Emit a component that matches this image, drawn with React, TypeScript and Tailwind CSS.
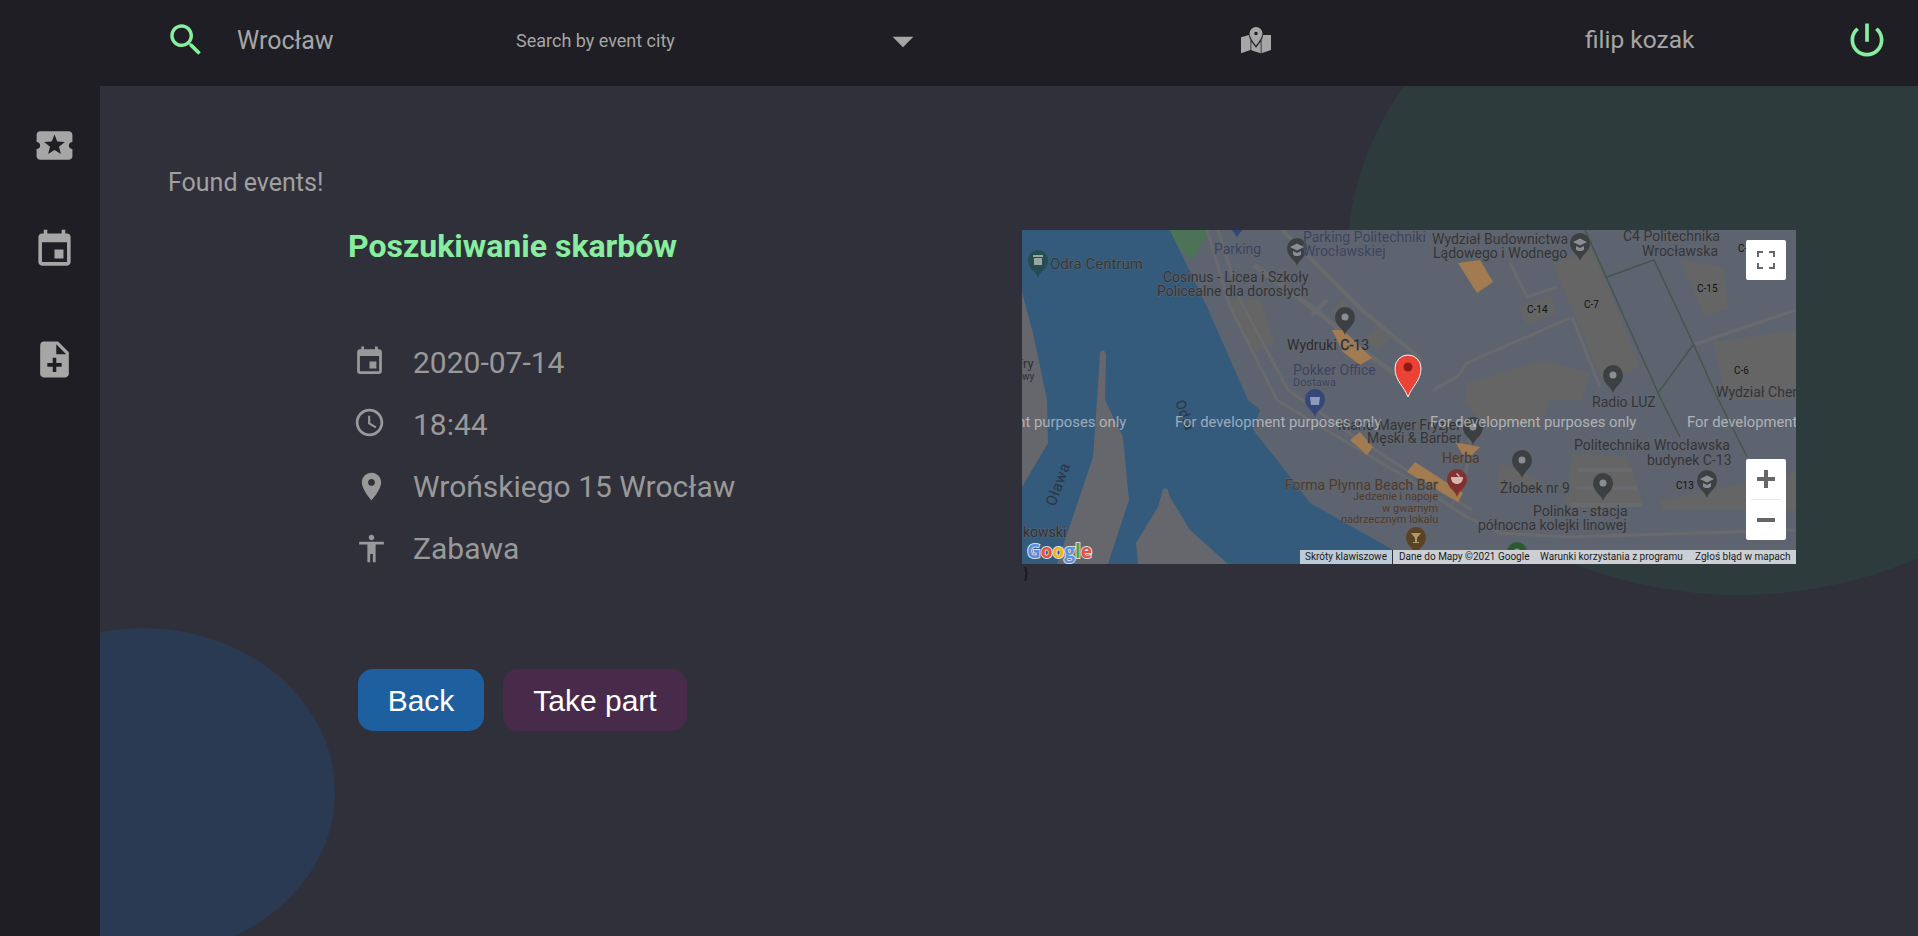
const ICONS = {
  search: 'M15.5 14h-.79l-.28-.27C15.41 12.59 16 11.11 16 9.5 16 5.91 13.09 3 9.5 3S3 5.91 3 9.5 5.91 16 9.5 16c1.61 0 3.09-.59 4.23-1.57l.27.28v.79l5 4.99L20.49 19l-4.99-5zm-6 0C7.01 14 5 11.99 5 9.5S7.01 5 9.5 5 14 7.01 14 9.5 11.99 14 9.5 14z',
  ticket: 'M20 12c0-1.1.9-2 2-2V6c0-1.1-.9-2-2-2H4c-1.1 0-1.99.9-1.99 2v4c1.1 0 1.99.9 1.99 2s-.89 2-2 2v4c0 1.1.9 2 2 2h16c1.1 0 2-.9 2-2v-4c-1.1 0-2-.9-2-2zm-4.42 4.8L12 14.5l-3.58 2.3 1.08-4.12-3.29-2.69 4.24-.25L12 5.8l1.54 3.95 4.24.25-3.29 2.69 1.09 4.11z',
  event: 'M17 12h-5v5h5v-5zM16 1v2H8V1H6v2H5c-1.11 0-1.99.9-1.99 2L3 19c0 1.1.89 2 2 2h14c1.1 0 2-.9 2-2V5c0-1.1-.9-2-2-2h-1V1h-2zm3 18H5V8h14v11z',
  noteAdd: 'M14 2H6c-1.1 0-1.99.9-1.99 2L4 20c0 1.1.89 2 1.99 2H18c1.1 0 2-.9 2-2V8l-6-6zm2 14h-3v3h-2v-3H8v-2h3v-3h2v3h3v2zm-3-7V3.5L18.5 9H13z',
  time: 'M11.99 2C6.47 2 2 6.48 2 12s4.47 10 9.99 10C17.52 22 22 17.52 22 12S17.52 2 11.99 2zM12 20c-4.42 0-8-3.58-8-8s3.58-8 8-8 8 3.58 8 8-3.58 8-8 8zM12.5 7H11v6l5.25 3.15.75-1.23-4.5-2.67z',
  room: 'M12 2C8.13 2 5 5.13 5 9c0 5.25 7 13 7 13s7-7.75 7-13c0-3.87-3.13-7-7-7zm0 9.5c-1.38 0-2.5-1.12-2.5-2.5s1.12-2.5 2.5-2.5 2.5 1.12 2.5 2.5-1.12 2.5-2.5 2.5z',
  person: 'M12 2c1.1 0 2 .9 2 2s-.9 2-2 2-2-.9-2-2 .9-2 2-2zm9 7h-6v13h-2v-6h-2v6H9V9H3V7h18v2z',
  drop: 'M7 10l5 5 5-5z',
  power: 'M13 3h-2v10h2V3zm4.83 2.17l-1.42 1.42C17.99 7.86 19 9.81 19 12c0 3.87-3.13 7-7 7s-7-3.13-7-7c0-2.19 1.01-4.14 2.58-5.42L6.17 5.17C4.23 6.82 3 9.26 3 12c0 4.97 4.03 9 9 9s9-4.03 9-9c0-2.74-1.23-5.18-3.17-6.83z',
};

function Icon({ name, className }: { name: keyof typeof ICONS; className: string }) {
  return (
    <svg viewBox="0 0 24 24" fill="currentColor" className={className}>
      <path d={ICONS[name]} />
    </svg>
  );
}

function MapIcon({ className }: { className: string }) {
  return (
    <svg viewBox="0 0 30 27" fill="currentColor" fillRule="evenodd" className={className}>
      <path d="M15 0a6.500 6.500 0 0 0-6.500 6.500C8.500 11 15 18.500 15 18.500S21.500 11 21.500 6.500A6.500 6.500 0 0 0 15 0zm0 4.700a1.800 1.800 0 1 1 0 3.600 1.800 1.800 0 0 1 0-3.600z" />
      <path d="M0 10.300L7.800 8C8.200 10 9 12 9.500 13V23L0 26.300z" />
      <path d="M10.300 14.500L15 20.800l4.700-6.300V26.300L15 24.800l-4.700-1.500z" />
      <path d="M20.500 26.300V13c.7-1.200 1.300-2.800 1.700-5L30 8V23z" />
    </svg>
  );
}

function Pin({ x, y, color, inner = 'dot' }: { x: number; y: number; color: string; inner?: string }) {
  return (
    <g transform={`translate(${x} ${y})`}>
      <path d="M0 0C-2-7-10-9-10-18a10 10 0 0 1 20 0C10-9 2-7 0 0z" fill={color} />
      {inner === 'dot' && <circle cx="0" cy="-18" r="3.500" fill="#8a8d92" />}
      {inner === 'grad' && <path d="M-7-19l7-3.500 7 3.500-7 3.500zM-4-15v3.500c2 2 6 2 8 0V-15l-4 2z" fill="#8a8d94" />}
      {inner === 'bank' && <path d="M-5-23h10v2H-5zM-4-20h8v7h-8z" fill="#9aa6a3" />}
      {inner === 'shop' && <path d="M-5-20h10l-1 8h-8z" fill="#8e9bb8" />}
      {inner === 'herb' && <path d="M-6-20h12c0 5-3 7-6 7s-6-2-6-7zM0-24l3 3-1 1-3-3z" fill="#d6b7ac" />}
      {inner === 'glass' && <path d="M-5-22H5L1-17v4h2v1h-6v-1h2v-4z" fill="#b09a6c" />}
    </g>
  );
}

const LABELS: [number, number, string, string, number][] = [
  [28, 39, 'Odra Centrum', '#2a3a3e', 15],
  [192, 24, 'Parking', '#3a4462', 14],
  [281, 12, 'Parking Politechniki', '#3a4462', 14],
  [281, 26, 'Wrocławskiej', '#3a4462', 14],
  [410, 14, 'Wydział Budownictwa', '#333438', 14],
  [411, 28, 'Lądowego i Wodnego', '#333438', 14],
  [601, 11, 'C4 Politechnika', '#333438', 14],
  [620, 26, 'Wrocławska', '#333438', 14],
  [141, 52, 'Cosinus - Licea i Szkoły', '#333438', 14],
  [135, 66, 'Policealne dla dorosłych', '#333438', 14],
  [265, 120, 'Wydruki C-13', '#2b2b2e', 14],
  [271, 145, 'Pokker Office', '#3a4462', 14],
  [271, 156, 'Dostawa', '#3a4462', 11],
  [570, 177, 'Radio LUZ', '#333438', 14],
  [694, 167, 'Wydział Chem', '#333438', 14],
  [316, 200, 'Mario Mayer Fryzjer', '#333438', 14],
  [345, 213, 'Męski & Barber', '#333438', 14],
  [420, 233, 'Herba', '#4f3a2a', 14],
  [263, 260, 'Forma Płynna Beach Bar', '#4f3a2a', 14],
  [331, 270, 'Jedzenie i napoje', '#4f3a2a', 11],
  [360, 282, 'w gwarnym', '#4f3a2a', 11],
  [319, 293, 'nadrzecznym lokalu', '#4f3a2a', 11],
  [478, 263, 'Żłobek nr 9', '#333438', 14],
  [552, 220, 'Politechnika Wrocławska', '#333438', 14],
  [625, 235, 'budynek C-13', '#333438', 14],
  [511, 286, 'Polinka - stacja', '#333438', 14],
  [456, 300, 'północna kolejki linowej', '#333438', 14],
  [1, 307, 'kowski', '#2d3036', 14],
  [-6, 138, 'Fry', '#2d3036', 13],
  [0, 150, 'wy', '#2d3036', 10],
];

const SMALL: [number, number, string][] = [
  [505, 83, 'C-14'], [562, 78, 'C-7'], [675, 62, 'C-15'], [716, 22, 'C-'], [712, 144, 'C-6'], [654, 259, 'C13'],
];

function MapPicture() {
  return (
    <svg viewBox="0 0 774 334" className="block w-[774px] h-[334px]" fontFamily="Roboto, sans-serif">
      <rect width="774" height="334" fill="#5e646f" />
      <path d="M0 0H148L185 77L226 170L238 180L231 200L255 230L288 273L371 320L400 334H0z" fill="#345a7c" />
      <path d="M0 62L11 103L25 170L26 213L0 257z" fill="#65676c" />
      <path d="M78 122C82 118 85 122 84 130L83 170L101 207L107 270L86 334H35L71 227L75 170z" fill="#65676c" />
      <path d="M141 259C146 256 146 262 148 267L168 300L206 334H116L114 313L136 277z" fill="#65676c" />
      <path d="M148 0H188L172 28C162 28 156 18 148 0z" fill="#4c7358" />

      <g fill="#656565">
        <path d="M206 70L238 70L253 113L233 123L216 90z" />
        <path d="M496 77L528 65L535 83L505 95z" />
        <path d="M531 33L571 20L618 137L581 153z" />
        <path d="M658 30L701 37L706 78L683 87z" />
        <path d="M691 112L774 100V170H705z" />
        <path d="M445 153L521 130L568 143L560 170H445z" />
        <path d="M441 170H528L518 197L458 190z" />
        <path d="M551 223L605 227L621 273L541 277z" />
        <path d="M638 270L774 243V280L640 280z" />
        <path d="M478 233L520 250L515 263L475 260z" />
        <path d="M320 70L334 84L325 96L310 80z" />
        <path d="M342 110L358 96L370 108L356 120z" />
      </g>
      <g fill="none" stroke="#696a6d" strokeWidth="3">
        <path d="M185 0L208 77L255 170L321 210L388 250L445 287L478 303L545 307L774 300" />
        <path d="M196 0L218 70L266 160L330 205L400 250L450 280" />
        <path d="M411 160L435 147L445 133L548 88" />
        <path d="M550 87L578 157" />
        <path d="M488 33L505 67L535 57" />
        <path d="M671 115L774 80" />
        <path d="M440 190C455 210 445 250 430 275" />
        <path d="M232 35L300 85L340 120L375 145" strokeWidth="5" />
        <path d="M260 0L340 80L400 130" strokeWidth="4" />
        <path d="M290 85L305 70" strokeWidth="4" />
        <path d="M555 240H610M555 258H615M550 275H620" strokeWidth="4" />
      </g>
      <g fill="none" stroke="#46554c" strokeWidth="1.500">
        <path d="M563 0L638 167L658 207" />
        <path d="M585 47L632 30L671 113L695 167L725 227" />
        <path d="M671 115L636 163" />
      </g>
      <g fill="#a27c50">
        <path d="M436 33L458 30L471 52L455 63z" />
        <path d="M310 100L321 100L350 128L338 135L321 122z" />
        <path d="M328 210L338 202L351 217L345 225z" />
        <path d="M385 242L393 232L441 263L436 272z" />
        <path d="M433 212L458 217L450 225L443 228z" />
      </g>

      <Pin x={16} y={48} color="#264e52" inner="bank" />
      <Pin x={215} y={8} color="#354778" inner="none" />
      <Pin x={275} y={36} color="#3c4043" inner="grad" />
      <Pin x={558} y={31} color="#3c4043" inner="grad" />
      <Pin x={323} y={105} color="#3c4043" />
      <Pin x={293} y={187} color="#354778" inner="shop" />
      <Pin x={591} y={163} color="#3c4043" />
      <Pin x={451} y={215} color="#3c4043" />
      <Pin x={435} y={267} color="#7f3230" inner="herb" />
      <Pin x={500} y={248} color="#3c4043" />
      <Pin x={581} y={271} color="#3c4043" />
      <Pin x={685} y={268} color="#3c4043" inner="grad" />
      <Pin x={394} y={325} color="#5a4325" inner="glass" />
      <Pin x={495} y={340} color="#2b5a30" />

      {LABELS.map(([x, y, text, color, size]) => (
        <text key={text} x={x} y={y} fill={color} fontSize={size} stroke="#63666d" strokeWidth="1" paintOrder="stroke">{text}</text>
      ))}
      {SMALL.map(([x, y, text]) => (
        <text key={text} x={x} y={y} fill="#111" fontSize="10">{text}</text>
      ))}
      <text x="33" y="277" fill="#2d3540" fontSize="15" transform="rotate(-70 33 277)" letterSpacing="0.500">Oława</text>
      <text x="153" y="172" fill="#2d3540" fontSize="14" transform="rotate(70 153 172)" letterSpacing="0.500">Odra</text>

      {[-102, 153, 408, 665].map((x) => (
        <text key={x} x={x} y="197" fill="#ffffff" fillOpacity="0.5" fontSize="14.800">For development purposes only</text>
      ))}

      <path d="M386 167C382 156 373 151 373 138a13 13 0 0 1 26 0C399 151 390 156 386 167z" fill="#ea4335" stroke="#f4f4f4" strokeWidth="1" />
      <circle cx="386" cy="137" r="4.500" fill="#8f1a14" />

      <text x="5" y="328" fontSize="19" fontWeight="700" stroke="#d8dde2" strokeWidth="2" paintOrder="stroke" fontFamily="Open Sans, sans-serif">
        <tspan fill="#5a8fe0">G</tspan>
        <tspan fill="#e5513f">o</tspan>
        <tspan fill="#f2b70f">o</tspan>
        <tspan fill="#5a8fe0">g</tspan>
        <tspan fill="#3fa757">l</tspan>
        <tspan fill="#e5513f">e</tspan>
      </text>
    </svg>
  );
}

function MapBox() {
  return (
    <div className="relative w-[774px] h-[334px] overflow-hidden">
      <MapPicture />
      <button className="absolute right-[10px] top-[10px] w-[40px] h-[40px] bg-white rounded-[2px] flex items-center justify-center">
        <svg viewBox="0 0 18 18" className="w-[18px] h-[18px]" fill="#666">
          <path d="M0 6V0h6v2H2v4zM12 0h6v6h-2V2h-4zM0 12h2v4h4v2H0zM16 12h2v6h-6v-2h4z" />
        </svg>
      </button>
      <div className="absolute right-[10px] top-[229px] w-[40px] h-[81px] bg-white rounded-[2px] flex flex-col items-center">
        <div className="h-[40px] flex items-center justify-center">
          <svg viewBox="0 0 18 18" className="w-[18px] h-[18px]" fill="#666"><path d="M7 0h4v7h7v4h-7v7H7v-7H0V7h7z" /></svg>
        </div>
        <div className="w-[30px] h-px bg-[#e6e6e6]" />
        <div className="h-[40px] flex items-center justify-center">
          <svg viewBox="0 0 18 18" className="w-[18px] h-[18px]" fill="#666"><path d="M0 7h18v4H0z" /></svg>
        </div>
      </div>
      <div className="absolute right-0 bottom-0 h-[14px] flex text-[10px] leading-[14px] text-[#1b1b1b] whitespace-nowrap">
        <span className="w-[93px] pl-[5px] bg-[#bccbd8] border-r border-[#2d3036]">Skróty klawiszowe</span>
        <span className="w-[403px] pl-[6px] bg-[#ccd0d4] flex">
          <span className="w-[141px]">Dane do Mapy ©2021 Google</span>
          <span className="w-[155px]">Warunki korzystania z programu</span>
          <span>Zgłoś błąd w mapach</span>
        </span>
      </div>
    </div>
  );
}

function InfoRow({ icon, text, iconClass }: { icon: keyof typeof ICONS; text: string; iconClass: string }) {
  return (
    <div className="flex items-center h-[62px]">
      <Icon name={icon} className={`w-[33px] h-[33px] shrink-0 ${iconClass}`} />
      <span>{text}</span>
    </div>
  );
}

export default function App() {
  return (
    <div className="relative w-[1918px] h-[936px] overflow-hidden bg-[#30303a] font-['Roboto',sans-serif] text-[#999999]">
      <div className="absolute left-[-49px] top-[628px] w-[384px] h-[328px] rounded-[50%] bg-[#2a3a52]" />
      <div className="absolute left-[1347px] top-[-75px] w-[784px] h-[670px] rounded-[50%] bg-[#2e3b3c]" />

      <div className="relative flex flex-col h-full">
        <header className="h-[86px] shrink-0 bg-[#1e1e24] flex items-center">
          <Icon name="search" className="ml-[165px] w-[42px] h-[42px] text-[#87ee9f] mb-[6px]" />
          <span className="ml-[30px] w-[279px] text-[25px] text-[#a6a6a6] mb-[4px]">Wrocław</span>
          <span className="w-[362px] text-[18px] text-[#a6a6a6] mb-[6px]">Search by event city</span>
          <Icon name="drop" className="w-[50px] h-[50px] text-[#a6a6a6] mb-[5px]" />
          <MapIcon className="ml-[313px] w-[30px] h-[27px] text-[#a6a6a6] mb-[6px]" />
          <span className="ml-[314px] w-[260px] text-[24.500px] text-[#a6a6a6] mb-[6px]">filip kozak</span>
          <Icon name="power" className="w-[44px] h-[44px] text-[#87ee9f] mb-[6px]" />
        </header>

        <div className="flex flex-1 min-h-0">
          <aside className="w-[100px] shrink-0 bg-[#1e1e24] flex flex-col items-center pt-[38px] pl-[8px] text-[#a6a6a6]">
            <Icon name="ticket" className="w-[43px] h-[43px]" />
            <Icon name="event" className="w-[43px] h-[43px] mt-[61px]" />
            <Icon name="noteAdd" className="w-[43px] h-[43px] mt-[67px]" />
          </aside>

          <main className="flex-1 pl-[68px] pt-[81px]">
            <p className="text-[25px] leading-[32px] text-[#a0a0a0]">Found events!</p>
            <div className="flex mt-[29px]">
              <div className="ml-[181px] w-[673px]">
                <h2 className="-ml-px text-[32px] leading-[36px] font-bold text-[#87ee9f]">Poszukiwanie skarbów</h2>
                <div className="mt-[67px] text-[30px] ml-[4px]">
                  <InfoRow icon="event" text="2020-07-14" iconClass="mb-[2px] mr-[27px]" />
                  <InfoRow icon="time" text="18:44" iconClass="mb-[4px] mr-[27px]" />
                  <InfoRow icon="room" text="Wrońskiego 15 Wrocław" iconClass="ml-[2px] mr-[25px]" />
                  <InfoRow icon="person" text="Zabawa" iconClass="ml-[2px] mr-[25px]" />
                </div>
                <div className="mt-[90px] ml-[9px] flex gap-[19px] font-['Liberation_Sans',sans-serif] text-[30px] text-white">
                  <button className="w-[126px] h-[62px] rounded-[15px] bg-[#1e5f9f]">Back</button>
                  <button className="w-[184px] h-[62px] rounded-[15px] bg-[#482b4b]">Take part</button>
                </div>
              </div>
              <div className="mt-[2px]">
                <MapBox />
                <p className="text-[16px] leading-[20px] text-[#111] font-['Liberation_Serif',serif]">{'}'}</p>
              </div>
            </div>
          </main>
        </div>
      </div>
    </div>
  );
}
